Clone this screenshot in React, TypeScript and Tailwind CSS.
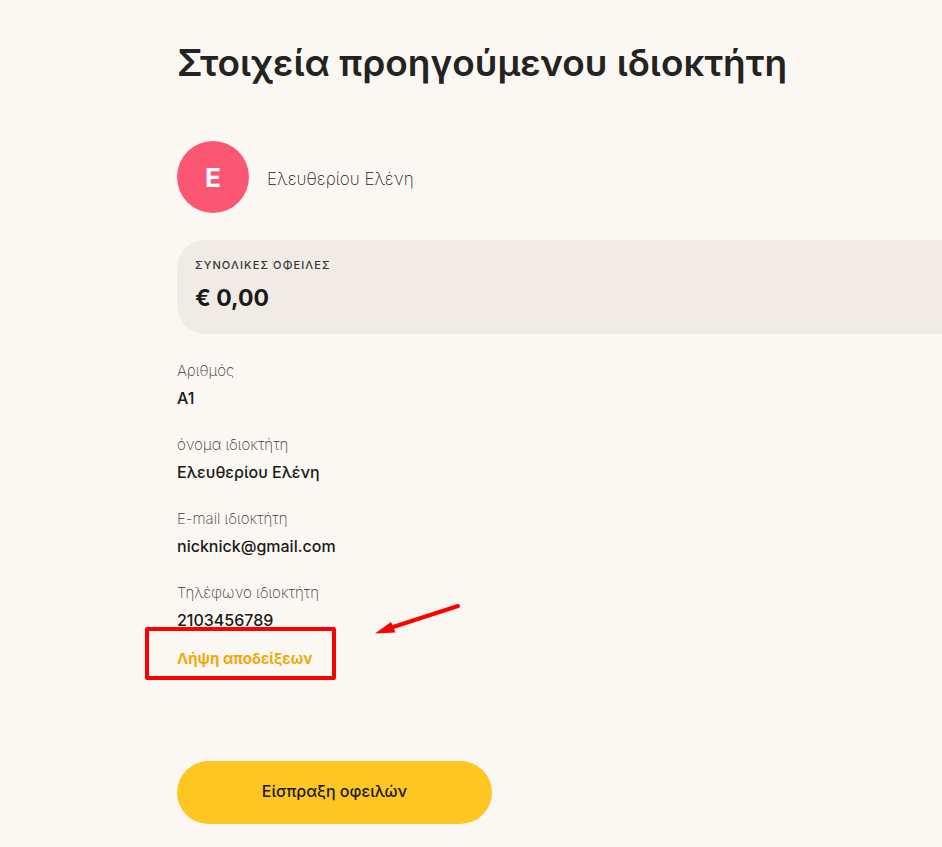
interface Field {
  label: string
  value: string
}

const owner = 'Ελευθερίου Ελένη'

const fields: Field[] = [
  { label: 'Αριθμός', value: 'A1' },
  { label: 'όνομα ιδιοκτήτη', value: owner },
  { label: 'E-mail ιδιοκτήτη', value: 'nicknick@gmail.com' },
  { label: 'Τηλέφωνο ιδιοκτήτη', value: '2103456789' },
]

function DebtCard({ total }: { total: string }) {
  return (
    <section className="mt-[27px] rounded-l-[28px] bg-[#f0ebe5] px-[18px] pt-4 pb-5">
      <h2 className="text-[11px] leading-[18px] font-medium tracking-widest text-[#383735]">ΣΥΝΟΛΙΚΕΣ ΟΦΕΙΛΕΣ</h2>
      <p className="mt-2 text-[23px] leading-8 font-bold">{total}</p>
    </section>
  )
}

function ReceiptsLink() {
  return (
    <div className="relative mt-3 w-fit">
      <a href="#receipts" className="block text-[15px] leading-6 font-bold text-[#f3a908]">
        Λήψη αποδείξεων
      </a>
      {/* Callout frame and arrow */}
      <div className="pointer-events-none absolute -top-5 -left-8 h-[53px] w-[191px] rounded-xs border-4 border-[#fe0000]" />
      <svg
        className="pointer-events-none absolute -top-11 left-[197px]"
        width="88"
        height="34"
        viewBox="0 0 88 34"
        aria-hidden="true"
      >
        <path d="M84 3 L16 25" stroke="#fe0000" strokeWidth="4" strokeLinecap="round" fill="none" />
        <path d="M1 30.5 L17 19 L21.5 29.5 Z" fill="#fe0000" />
      </svg>
    </div>
  )
}

export default function App() {
  return (
    <main className="min-h-screen overflow-hidden bg-[#fbf8f3] pt-[41px] pb-[23px] pl-[177px] font-['Inter','Noto_Sans',sans-serif] text-[#1a1a1a]">
      <h1 className="text-[37px] leading-[44px] font-semibold whitespace-nowrap text-[#232422]">
        Στοιχεία προηγούμενου ιδιοκτήτη
      </h1>

      <div className="mt-14 flex items-center gap-[18px]">
        <div className="flex size-[72px] items-center justify-center rounded-full bg-[#fc5772] pt-0.5 text-[26px] leading-8 font-bold text-white">
          E
        </div>
        <p className="pt-1 text-[17px] leading-7 font-extralight">{owner}</p>
      </div>

      <DebtCard total="€ 0,00" />

      <dl className="mt-[25px] flex flex-col gap-5">
        {fields.map(f => (
          <div key={f.label}>
            <dt className="text-[15px] leading-6 font-extralight text-[#3a3937]">{f.label}</dt>
            <dd className="text-base leading-[30px] font-medium">{f.value}</dd>
          </div>
        ))}
      </dl>

      <ReceiptsLink />

      <button
        type="button"
        className="mt-[90px] block h-[63px] w-[315px] rounded-full bg-[#fdc623] pb-1 text-base font-medium"
      >
        Είσπραξη οφειλών
      </button>
    </main>
  )
}
